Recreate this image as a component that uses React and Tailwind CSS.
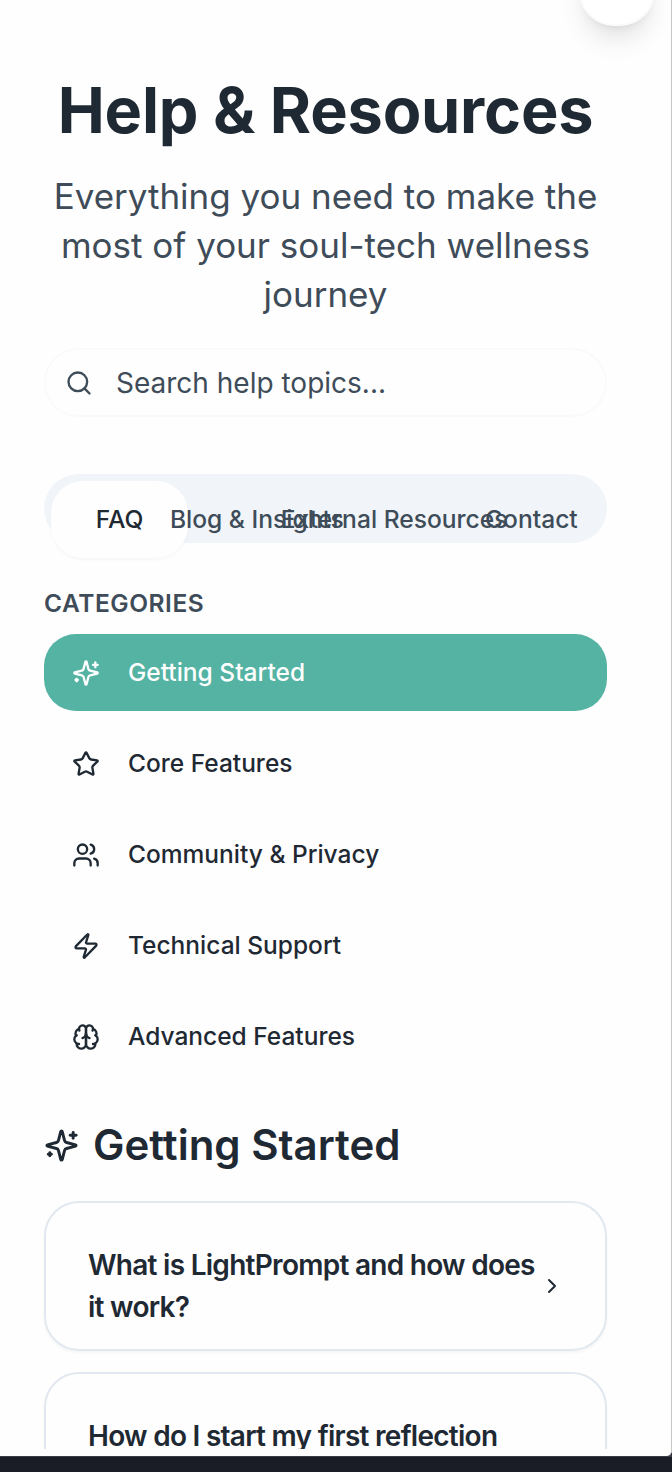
import { Search, Star, Users, Zap, ChevronRight } from "lucide-react";

function Icon({ className, children }) {
  return (
    <svg
      viewBox="0 0 24 24"
      fill="none"
      stroke="currentColor"
      strokeWidth="2"
      strokeLinecap="round"
      strokeLinejoin="round"
      className={className}
    >
      {children}
    </svg>
  );
}

function Sparkles({ className }) {
  return (
    <Icon className={className}>
      <path d="M9.937 15.5A2 2 0 0 0 8.5 14.063l-6.135-1.582a.5.5 0 0 1 0-.962L8.5 9.936A2 2 0 0 0 9.937 8.5l1.582-6.135a.5.5 0 0 1 .963 0L14.063 8.5A2 2 0 0 0 15.5 9.937l6.135 1.581a.5.5 0 0 1 0 .964L15.5 14.063a2 2 0 0 0-1.437 1.437l-1.582 6.135a.5.5 0 0 1-.963 0z" />
      <path d="M20 3v4" />
      <path d="M22 5h-4" />
      <path d="M4 17v2" />
      <path d="M5 18H3" />
    </Icon>
  );
}

function Brain({ className }) {
  return (
    <Icon className={className}>
      <path d="M12 5a3 3 0 1 0-5.997.125 4 4 0 0 0-2.526 5.77 4 4 0 0 0 .556 6.588A4 4 0 1 0 12 18Z" />
      <path d="M12 5a3 3 0 1 1 5.997.125 4 4 0 0 1 2.526 5.77 4 4 0 0 1-.556 6.588A4 4 0 1 1 12 18Z" />
      <path d="M15 13a4.5 4.5 0 0 1-3-4 4.5 4.5 0 0 1-3 4" />
      <path d="M17.599 6.5a3 3 0 0 0 .399-1.375" />
      <path d="M6.003 5.125A3 3 0 0 0 6.401 6.5" />
      <path d="M3.477 10.896a4 4 0 0 1 .585-.396" />
      <path d="M19.938 10.5a4 4 0 0 1 .585.396" />
      <path d="M6 18a4 4 0 0 1-1.967-.516" />
      <path d="M19.967 17.484A4 4 0 0 1 18 18" />
    </Icon>
  );
}

const tabs = ["FAQ", "Blog & Insights", "External Resources", "Contact"];

const categories = [
  { label: "Getting Started", icon: Sparkles },
  { label: "Core Features", icon: Star },
  { label: "Community & Privacy", icon: Users },
  { label: "Technical Support", icon: Zap },
  { label: "Advanced Features", icon: Brain },
];

const questions = [
  "What is LightPrompt and how does it work?",
  "How do I start my first reflection session?",
];

function Question({ text }) {
  return (
    <div className="flex h-[150px] shrink-0 items-center justify-between rounded-[35px] border-2 border-[#e2e8f0] pl-[42px] pr-[41px] pt-[19px] shadow-[0_2px_3px_rgba(0,0,0,0.04)]">
      <h3 className="w-[450px] text-[28px] font-semibold leading-[42px] tracking-[-0.026em]">{text}</h3>
      <ChevronRight className="size-6 shrink-0" />
    </div>
  );
}

export default function App() {
  return (
    <div className="flex h-[1472px] w-[672px] flex-col overflow-hidden bg-[#1a1d26] font-['Inter',sans-serif] text-[#1f2933]">
      <div className="relative h-[1456px] shrink-0 overflow-hidden rounded-br-[5px] border-r border-[#c6c6c6] bg-[#fefefe]">
        <div className="absolute -top-[51px] left-[579px] h-[77px] w-[76px] rounded-[35px] border-2 border-[#fbfbfb] bg-white shadow-[0_18px_26px_-5px_rgba(0,0,0,0.1),0_7px_11px_-7px_rgba(0,0,0,0.1)]" />
        <main className="flex h-[1449px] flex-col overflow-hidden pl-11 pr-16 pt-[75px]">
          <h1 className="text-center text-[63px] font-bold leading-[70px] tracking-[-0.2px] whitespace-nowrap">Help &amp; Resources</h1>
          <p className="mt-[27px] text-center text-[35px] leading-[49px] text-[#3e4c59]">
            Everything you need to make the most of your soul-tech wellness journey
          </p>
          <div className="mt-[29px] flex h-[69px] shrink-0 items-center gap-[23px] rounded-[35px] border-2 border-[#fafafa] pl-[19px] text-[28px] text-[#3e4c59]">
            <Search className="size-7" />
            <span>Search help topics...</span>
          </div>
          <div className="mt-[57px] grid h-[69px] shrink-0 grid-cols-4 rounded-[35px] bg-[#f1f5f9] p-[7px] text-[24.6px] font-medium text-[#3e4c59]">
            {tabs.map((tab, i) => (
              <button
                key={tab}
                className={
                  i === 0
                    ? "flex h-[77px] min-w-0 items-center justify-center rounded-[32px] bg-[#fefefe] text-[#1f2933] shadow-[0_2px_3px_rgba(0,0,0,0.03)]"
                    : "flex h-[77px] min-w-0 items-center justify-center whitespace-nowrap"
                }
              >
                {tab}
              </button>
            ))}
          </div>
          <h2 className="mt-[43px] text-[24.5px] font-semibold leading-[35px] tracking-[0.022em] text-[#3e4c59]">CATEGORIES</h2>
          <nav className="mt-[13px] flex flex-col gap-3.5">
            {categories.map(({ label, icon: Glyph }, i) => (
              <button
                key={label}
                className={
                  i === 0
                    ? "flex h-[77px] items-center gap-7 rounded-[32px] bg-[#54b3a3] pl-7 text-[24.5px] font-medium text-white"
                    : "flex h-[77px] items-center gap-7 rounded-[32px] pl-7 text-[24.5px] font-medium"
                }
              >
                <Glyph className="size-7" />
                {label}
              </button>
            ))}
          </nav>
          <div className="mt-[42px] flex items-center gap-3.5">
            <Sparkles className="size-[35px]" />
            <h2 className="text-[42px] font-semibold leading-[56px]">Getting Started</h2>
          </div>
          <div className="mt-7 flex flex-col gap-[21px]">
            {questions.map((q) => (
              <Question key={q} text={q} />
            ))}
          </div>
        </main>
      </div>
      <div className="-mt-px h-0.5 shrink-0 bg-[#3a3d46]" />
    </div>
  );
}
